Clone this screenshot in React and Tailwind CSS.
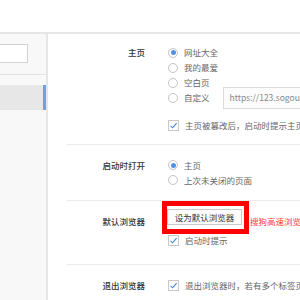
import React from 'react';

const font = { fontFamily: '"Noto Sans CJK SC", "Noto Sans", sans-serif' };

function Radio({ checked, children }) {
  return (
    <div className="flex items-center h-[15px]">
      <span className="w-[10px] h-[10px] rounded-full border border-[#c4c4c4] bg-white flex items-center justify-center shrink-0">
        {checked && <span className="w-[5px] h-[5px] rounded-full bg-[#4f92e3]" />}
      </span>
      <span className="ml-[6px] text-[#666] whitespace-nowrap">{children}</span>
    </div>
  );
}

function Check({ children, className = '' }) {
  return (
    <div className={`flex items-center h-[14px] ${className}`}>
      <span className="w-[11px] h-[11px] border border-[#c8c8c8] bg-white flex items-center justify-center shrink-0">
        <svg width="9" height="9" viewBox="0 0 9 9">
          <path d="M1.5 4.8 L3.6 6.8 L7.6 2.2" fill="none" stroke="#3f86dc" strokeWidth="1.1" />
        </svg>
      </span>
      <span className="ml-[6px] text-[#666] whitespace-nowrap">{children}</span>
    </div>
  );
}

function Section({ label, children, pt = 'pt-[12.5px]', pb = 'pb-[12.5px]', border = true }) {
  return (
    <div className={`relative ml-[19px] flex ${pt} ${pb} ${border ? 'border-b border-[#ececec]' : ''}`}>
      <div className="w-[78px] shrink-0 text-right text-[#333] font-medium leading-[15px] h-[15px] whitespace-nowrap">
        {label}
      </div>
      <div className="ml-[23px] flex flex-col">{children}</div>
    </div>
  );
}

export default function App() {
  return (
    <div className="w-[300px] h-[300px] overflow-hidden bg-white text-[8.5px]" style={font}>
      <div className="h-[32px] bg-white border-b-2 border-[#e6e6e6] box-content" />
      <div className="flex h-[266px]">
        <div className="w-[46px] shrink-0 bg-[#f8f8f8] border-r-2 border-[#e6e6e6] box-content pt-[10px]">
          <div className="w-[28px] h-[19px] bg-white border border-l-0 border-[#d2d2d2]" />
          <div className="mt-[11px] border-t border-[#e4e4e4]" />
          <div className="mt-[10px] h-[25px] bg-[#e7e7e7] flex justify-end">
            <div className="w-[3px] bg-[#6ba2e4]" />
          </div>
        </div>
        <div className="flex-1 min-w-0 overflow-hidden">
          <Section label="主页" pt="pt-[11px]" pb="pb-[12px]">
            <Radio checked>网址大全</Radio>
            <Radio>我的最爱</Radio>
            <Radio>空白页</Radio>
            <div className="flex items-center h-[15px]">
              <Radio>自定义</Radio>
              <div className="ml-[13px] h-[22px] w-[140px] shrink-0 border border-[#dcdcdc] bg-[#fcfcfc] flex items-center pl-[6px] text-[#888] whitespace-nowrap">
                https://123.sogou.com
              </div>
            </div>
            <Check className="mt-[13px]">主页被篡改后，启动时提示主页修复</Check>
          </Section>
          <Section label="启动时打开">
            <Radio checked>主页</Radio>
            <Radio>上次未关闭的页面</Radio>
          </Section>
          <Section label="默认浏览器" pb="pb-[17px]">
            <div className="flex items-center h-[15px]">
              <div className="h-[16px] w-[75px] -ml-[1px] -translate-y-[4px] border border-[#c9c9c9] bg-[#fbfbfb] flex items-center justify-center text-[#333] whitespace-nowrap">
                设为默认浏览器
              </div>
              <span className="ml-[8px] text-[#ff3b3b] whitespace-nowrap">搜狗高速浏览器不是默认浏览器</span>
            </div>
            <Check className="mt-[4.5px]">启动时提示</Check>
            <div className="absolute left-[95px] top-[-0.5px] w-[87px] h-[33px] border-[5px] border-[#ff0000]" />
          </Section>
          <Section label="退出浏览器" border={false}>
            <Check className="mt-[0.5px]">退出浏览器时，若有多个标签页打开时提醒</Check>
          </Section>
        </div>
      </div>
    </div>
  );
}
